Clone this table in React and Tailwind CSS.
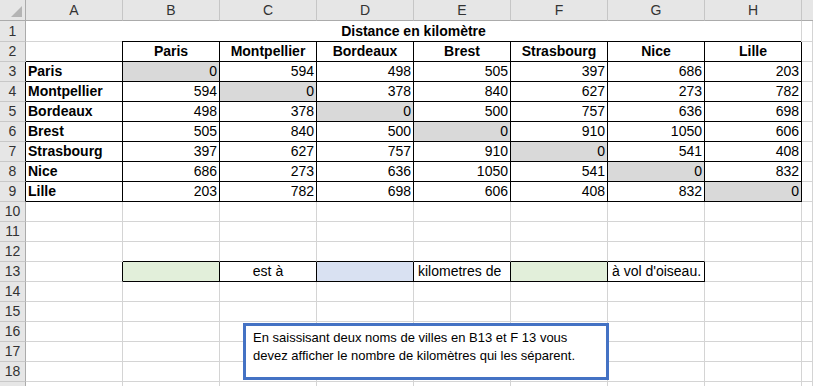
import React from "react";
import clsx from "clsx";

const cols = ["A", "B", "C", "D", "E", "F", "G", "H"];
const cities = ["Paris", "Montpellier", "Bordeaux", "Brest", "Strasbourg", "Nice", "Lille"];
const dist = [
  [0, 594, 498, 505, 397, 686, 203],
  [594, 0, 378, 840, 627, 273, 782],
  [498, 378, 0, 500, 757, 636, 698],
  [505, 840, 500, 0, 910, 1050, 606],
  [397, 627, 757, 910, 0, 541, 408],
  [686, 273, 636, 1050, 541, 0, 832],
  [203, 782, 698, 606, 408, 832, 0],
];

// one sheet cell: right and bottom edges only, black where the table has a border
const Cell = ({ right, bottom, fill, align = "left", bold, children }) => (
  <div
    className={clsx(
      "border-r border-b flex items-end pb-[1px] px-[2px] overflow-hidden whitespace-nowrap leading-[17px]",
      right ? "border-r-black" : "border-r-[#d4d4d4]",
      bottom ? "border-b-black" : "border-b-[#d4d4d4]",
      fill,
      align === "right" && "justify-end",
      align === "center" && "justify-center",
      bold && "font-bold"
    )}
  >
    {children}
  </div>
);

const RowHead = ({ n, dark }) => (
  <div
    className={clsx(
      "bg-[#e6e6e6] border-b border-b-[#c8c8c8] border-r flex items-center justify-center text-[#333] text-[14px]",
      dark ? "border-r-black" : "border-r-[#ababab]"
    )}
  >
    {n}
  </div>
);

const App = () => {
  const rows = [];

  // row 1: title merged over A1:H1
  rows.push(
    <React.Fragment key="r1">
      <RowHead n={1} />
      <div className="col-span-8 border-r border-r-[#d4d4d4] flex flex-col">
        <div className="flex-1 flex items-end justify-center font-bold leading-[17px] pb-[1px]">
          Distance en kilomètre
        </div>
        <div className="h-px flex">
          <div className="w-[96px] bg-[#d4d4d4]" />
          <div className="flex-1 bg-black" />
        </div>
      </div>
      <Cell />
    </React.Fragment>
  );

  // row 2: city headings
  rows.push(
    <React.Fragment key="r2">
      <RowHead n={2} />
      <Cell right bottom />
      {cities.map((c) => (
        <Cell key={c} right bottom bold align="center">
          {c}
        </Cell>
      ))}
      <Cell />
    </React.Fragment>
  );

  // rows 3-9: distance table
  cities.forEach((c, i) => {
    rows.push(
      <React.Fragment key={"r" + (i + 3)}>
        <RowHead n={i + 3} dark />
        <Cell right bottom bold>
          {c}
        </Cell>
        {dist[i].map((d, j) => (
          <Cell key={j} right bottom align="right" fill={i === j ? "bg-[#d9d9d9]" : undefined}>
            {d}
          </Cell>
        ))}
        <Cell />
      </React.Fragment>
    );
  });

  // rows 10-19
  for (let r = 10; r <= 19; r++) {
    if (r === 13) {
      rows.push(
        <React.Fragment key="r13">
          <RowHead n={13} />
          <Cell right />
          <Cell right bottom fill="bg-[#e2efda]" />
          <Cell right bottom align="center">
            est à
          </Cell>
          <Cell right bottom fill="bg-[#d9e1f2]" />
          <Cell right bottom>
            <span className="pl-[2px]">kilometres de</span>
          </Cell>
          <Cell right bottom fill="bg-[#e2efda]" />
          <Cell right bottom>
            <span className="pl-[2px]">à vol d'oiseau.</span>
          </Cell>
          <Cell />
          <Cell />
        </React.Fragment>
      );
      continue;
    }
    rows.push(
      <React.Fragment key={"r" + r}>
        <RowHead n={r} />
        {cols.map((c, j) => (
          <Cell key={c} bottom={r === 12 && j >= 1 && j <= 6} />
        ))}
        <Cell />
      </React.Fragment>
    );
  }

  return (
    <div className="relative w-[813px] h-[386px] overflow-hidden bg-white text-black text-[14px] font-['Liberation_Sans',Arial,sans-serif]">
      <div className="grid grid-cols-[26px_repeat(8,97px)_1fr] grid-rows-[21px_21px_repeat(18,20px)]">
        {/* column headings */}
        <div className="bg-[#e6e6e6] border-r border-r-[#ababab] border-b border-b-[#ababab] relative">
          <svg className="absolute inset-0" width="25" height="20" viewBox="0 0 25 20">
            <polygon points="22,6 22,17 11,17" fill="#b4b4b4" />
          </svg>
        </div>
        {cols.map((c) => (
          <div
            key={c}
            className="bg-[#e6e6e6] border-r border-r-[#c6c6c6] border-b border-b-[#ababab] flex items-center justify-center text-[#333] text-[14px]"
          >
            {c}
          </div>
        ))}
        <div className="bg-[#e6e6e6] border-b border-b-[#ababab]" />
        {rows}
      </div>

      {/* comment text box over the sheet */}
      <div className="absolute left-[243px] top-[323px] w-[366px] h-[57px] border-[3px] border-[#4472c4] bg-white px-[7px] pt-[3px] text-[13px] leading-[18px] whitespace-nowrap">
        En saissisant deux noms de villes en B13 et F 13 vous
        <br />
        devez afficher le nombre de kilomètres qui les séparent.
      </div>
    </div>
  );
};

export default App;
